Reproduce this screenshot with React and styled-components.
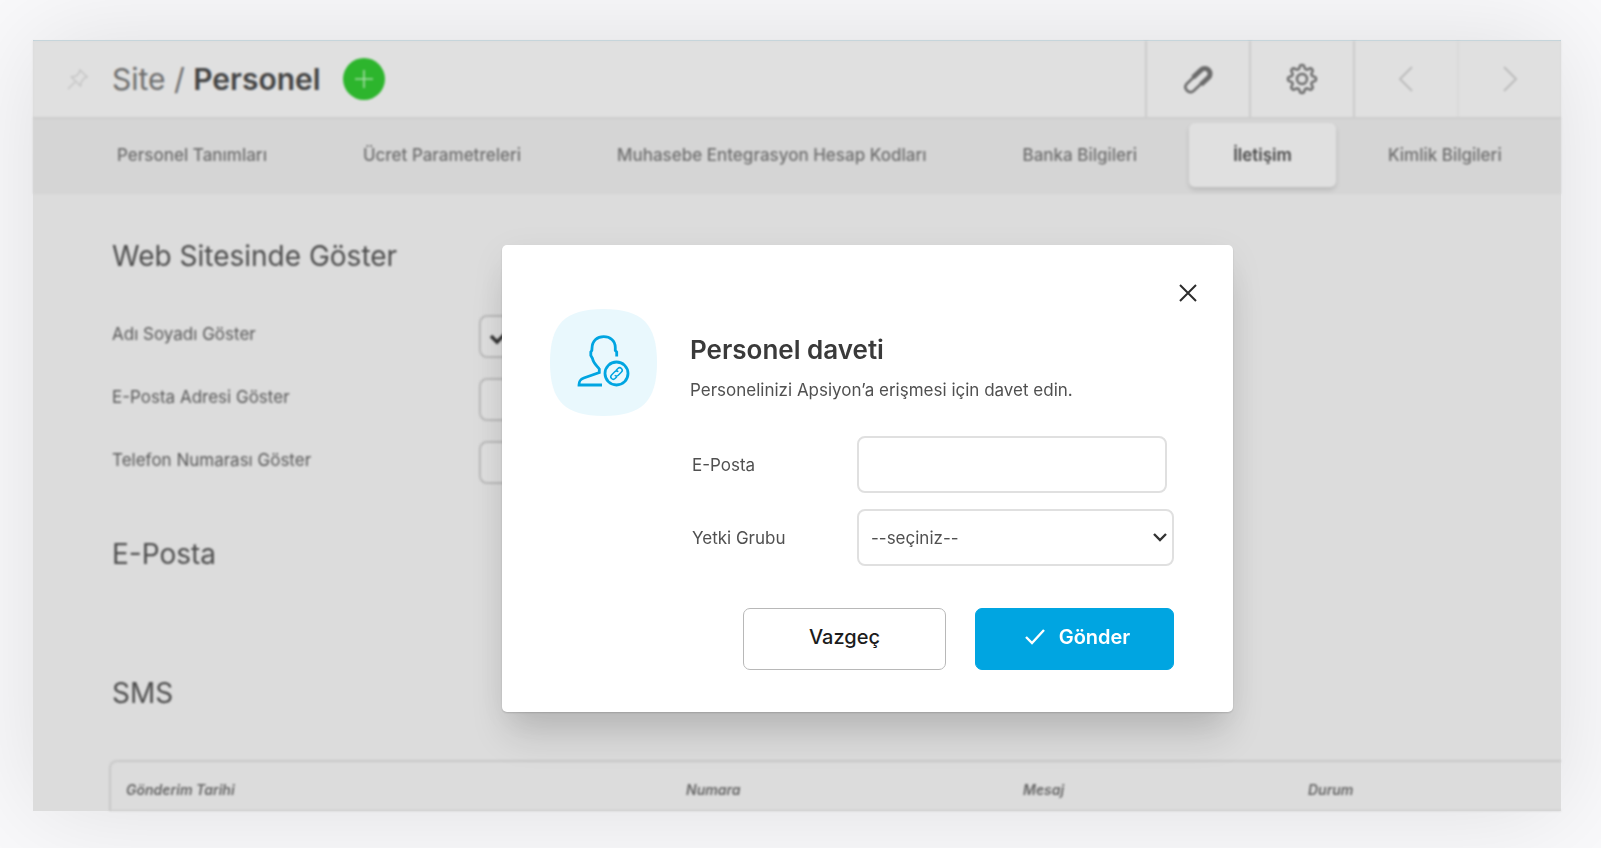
import styled, { createGlobalStyle } from 'styled-components';


const GlobalStyle = createGlobalStyle`
  * {
    box-sizing: border-box;
  }
  body {
    margin: 0;
    background: #f9f9fb;
    color: #3c3c3c;
    font-family: Inter, 'Liberation Sans', sans-serif;
    font-size: 17px;
  }
  button, input, select {
    font-family: inherit;
  }
`;

const Page = styled.div`
  min-height: 100vh;
  padding: 40px 40px 38px 33px;
  overflow: hidden;
`;

const Panel = styled.div`
  position: relative;
  border-top: 1px solid #b9d0d9;
  background: #dcdcdc;
  box-shadow: 0 0 100px rgba(0, 0, 0, 0.11);
`;

const Backdrop = styled.div`
  overflow: hidden;
  filter: blur(1px);
`;

const Header = styled.header`
  display: flex;
  align-items: stretch;
  height: 78px;
  background: #e0e0e0;
  border-bottom: 2px solid #cdcdcd;
`;

const HeaderTitle = styled.div`
  display: flex;
  flex: 1;
  align-items: center;
  padding-left: 34px;
  .pin {
    margin-right: 24px;
    color: #c6c6c6;
  }
`;

const Crumb = styled.h1`
  margin: 0 22px 0 0;
  color: #6c6c6c;
  font-size: 30px;
  font-weight: 400;
  line-height: 36px;
  strong {
    color: #444444;
    font-weight: 600;
  }
`;

const AddButton = styled.button`
  display: flex;
  align-items: center;
  justify-content: center;
  width: 42px;
  height: 42px;
  padding: 0;
  border: 0;
  border-radius: 50%;
  background: #2db52d;
  color: #a3dda3;
`;

const ToolButton = styled.button`
  display: flex;
  align-items: center;
  justify-content: center;
  width: 104px;
  padding: 0;
  border: 0;
  border-left: 2px solid ${props => props.$faint ? '#dadada' : '#cbcbcb'};
  background: transparent;
  color: ${props => props.$muted ? '#bdbdbd' : '#6a6a6a'};
`;

const Tabs = styled.nav`
  display: flex;
  gap: 8px;
  height: 75px;
  padding: 4px 0 7px 40px;
  background: #d5d5d5;
`;

const Tab = styled.a`
  display: flex;
  align-items: center;
  height: 64px;
  padding: 0 44px;
  border-radius: 6px;
  background: ${props => props.$active ? '#e0e0e0' : 'transparent'};
  box-shadow: ${props => props.$active ? '0 3px 5px rgba(0, 0, 0, 0.13)' : 'none'};
  color: ${props => props.$active ? '#484848' : '#6e6e6e'};
  font-size: 17px;
  font-weight: ${props => props.$active ? 600 : 500};
  text-decoration: none;
  white-space: nowrap;
`;

const Content = styled.main`
  padding: 44px 0 0 76px;
`;

const SectionTitle = styled.h2`
  margin: 0;
  padding-left: 3px;
  color: #4c4c4c;
  font-size: 28px;
  font-weight: 400;
  line-height: 36px;
`;

const Options = styled.div`
  display: grid;
  gap: 20px;
  margin: 41px 0 52px;
  padding-left: 3px;
`;

const Option = styled.label`
  display: grid;
  grid-template-columns: 367px 43px;
  height: 43px;
  color: #585858;
  font-size: 17px;
  line-height: 38px;
`;

const Checkbox = styled.input`
  width: 43px;
  height: 43px;
  margin: 0;
  appearance: none;
  border: 2px solid #bababa;
  border-radius: 8px;
  background: #dfdfdf;
  &:checked {
    background: #dfdfdf url("data:image/svg+xml,%3Csvg xmlns='http://www.w3.org/2000/svg' viewBox='0 0 20 20'%3E%3Cpath d='M2 7l6 6L18 3' fill='none' stroke='%23333' stroke-width='3.5'/%3E%3C/svg%3E") 8px 12px / 20px no-repeat;
  }
`;

const SmsTitle = styled(SectionTitle)`
  margin-top: 103px;
`;

const MessageTable = styled.table`
  width: 100%;
  margin-top: 49px;
  border: 2px solid #c9c9c9;
  border-right: 0;
  border-bottom-width: 1px;
  border-radius: 8px 0 0 0;
  border-spacing: 0;
  table-layout: fixed;
  th {
    height: 48px;
    padding: 6px 0 0 15px;
    color: #656565;
    font-size: 14px;
    font-style: italic;
    font-weight: 600;
    text-align: left;
  }
`;

const Overlay = styled.div`
  position: absolute;
  inset: 0;
  display: flex;
  align-items: flex-start;
  justify-content: center;
  padding: 204px 0 0 141px;
`;

const Dialog = styled.section`
  display: flex;
  flex-direction: column;
  width: 731px;
  padding: 34px 30px 42px 48px;
  border-radius: 5px;
  background: #ffffff;
  box-shadow: 0 1px 2px rgba(0, 0, 0, 0.16), 0 28px 36px -6px rgba(0, 0, 0, 0.14), 0 8px 36px rgba(0, 0, 0, 0.06);
`;

const CloseButton = styled.button`
  display: flex;
  align-items: center;
  justify-content: center;
  align-self: flex-end;
  width: 30px;
  height: 28px;
  padding: 0;
  border: 0;
  background: transparent;
  color: #2c2c2c;
`;

const DialogBody = styled.div`
  display: flex;
  gap: 33px;
  padding-right: 29px;
`;

const IconTile = styled.svg`
  flex: none;
  width: 107px;
  height: 107px;
  margin-top: 2px;
`;

const Form = styled.form`
  flex: 1;
  padding-top: 26px;
`;

const DialogTitle = styled.h2`
  margin: 0;
  color: #3a3a3a;
  font-size: 26px;
  font-weight: 600;
  line-height: 34px;
`;

const Lead = styled.p`
  margin: 11px 0 34px;
  color: #505050;
  font-size: 17px;
  line-height: 24px;
`;

const Field = styled.div`
  display: grid;
  grid-template-columns: 165px 1fr;
  align-items: center;
  margin-bottom: 16px;
  padding-left: 2px;
  label {
    color: #505050;
    font-size: 17px;
  }
`;

const TextInput = styled.input`
  width: calc(100% - 7px);
  height: 57px;
  padding: 0 12px;
  border: 2px solid #e0e0e0;
  border-radius: 8px;
  font-size: 17px;
  outline: 0;
`;

const SelectInput = styled.select`
  width: 100%;
  height: 57px;
  padding: 0 12px;
  appearance: none;
  border: 2px solid #e0e0e0;
  border-radius: 8px;
  background: #ffffff url("data:image/svg+xml,%3Csvg xmlns='http://www.w3.org/2000/svg' viewBox='0 0 14 9'%3E%3Cpath d='M1 1l6 6 6-6' fill='none' stroke='%23333' stroke-width='2.4'/%3E%3C/svg%3E") right 5px center / 14px 9px no-repeat;
  color: #505050;
  font-size: 17px;
`;

const Actions = styled.div`
  display: flex;
  justify-content: flex-end;
  gap: 29px;
  margin-top: 42px;
`;

const Button = styled.button`
  display: flex;
  align-items: center;
  justify-content: center;
  gap: 14px;
  width: ${props => props.$primary ? 199 : 203}px;
  height: 62px;
  padding: ${props => props.$primary ? '0 0 4px 6px' : '0 0 4px'};
  border: 1px solid ${props => props.$primary ? '#00a5e1' : '#b8b8b8'};
  border-radius: 7px;
  background: ${props => props.$primary ? '#00a5e1' : '#ffffff'};
  color: ${props => props.$primary ? '#ffffff' : '#1c1c1c'};
  font-size: 20px;
  font-weight: ${props => props.$primary ? 600 : 500};
`;

const tabs = [
  'Personel Tanımları',
  'Ücret Parametreleri',
  'Muhasebe Entegrasyon Hesap Kodları',
  'Banka Bilgileri',
  'İletişim',
  'Kimlik Bilgileri',
];

const options = [
  { label: 'Adı Soyadı Göster', checked: true },
  { label: 'E-Posta Adresi Göster', checked: false },
  { label: 'Telefon Numarası Göster', checked: false },
];

const PinIcon = () => (
  <svg className="pin" width="21" height="21" viewBox="0 0 21 21" fill="none" stroke="currentColor" strokeWidth="1.6">
    <path d="M13 1l7 7-2.5 1-3 3.5-1 4.5-9-9 4.500-1 3-3zM8 13l-7 7" />
  </svg>
);

const PlusIcon = () => (
  <svg width="18" height="18" viewBox="0 0 18 18" stroke="currentColor" strokeWidth="1.6">
    <path d="M9 0v18M0 9h18" />
  </svg>
);

const ClipIcon = () => (
  <svg width="32" height="30" viewBox="0 0 32 30" fill="none" stroke="currentColor">
    <path d="M14 11l-9.500 9a5 5 0 0 0 7 7L21 18" strokeWidth="2.6" />
    <path d="M11 13.500L19 6a5.300 5.300 0 0 1 7.500 7.500L19 20.500" strokeWidth="5" />
  </svg>
);

// eight rounded teeth around the hub
const gearPath = Array.from({ length: 96 }, (_, i) => {
  const angle = (i / 96) * Math.PI * 2;
  const wave = Math.cos(8 * angle);
  const r = 12.2 + 2 * Math.tanh(1.6 * wave);
  return `${(16 + r * Math.cos(angle)).toFixed(2)} ${(16 + r * Math.sin(angle)).toFixed(2)}`;
}).join('L');

const GearIcon = () => (
  <svg width="32" height="32" viewBox="0 0 32 32" fill="none" stroke="currentColor" strokeWidth="2.4" strokeLinejoin="round">
    <path d={`M${gearPath}Z`} />
    <circle cx="16" cy="16" r="5" />
  </svg>
);

const ArrowIcon = ({ path }) => (
  <svg width="14" height="26" viewBox="0 0 14 26" fill="none" stroke="currentColor" strokeWidth="2">
    <path d={path} />
  </svg>
);

const InviteIcon = () => (
  <IconTile viewBox="0 0 107 107" fill="none" stroke="#00a5e1" strokeWidth="2.8">
    <path d="M53.5 0C92 0 107 15 107 53.5S92 107 53.5 107 0 92 0 53.5 15 0 53.5 0z" fill="#e9f8fd" stroke="none" />
    <path d="M66.7 47.500v-4.500l-1.400-1.500v-3C65.300 31.500 60 27.700 53.700 27.700S42.200 31.500 42 39.300l-.2 2.200-1 1.500v3.500l1.700 3c.8 4.500 4 7 6.800 10.500v3.500l-15.500 5.500c-3.800 1.500-4.800 3-4.800 7H52" />
    <circle cx="66.500" cy="64.500" r="11.500" />
    <g transform="rotate(-45 66.500 64.500)" strokeWidth="1.5">
      <path d="M64.500 67h-2.500a2.500 2.500 0 0 1 0-5h4.500a2.500 2.500 0 0 1 2.500 2.500" />
      <path d="M68.500 62h2.500a2.500 2.500 0 0 1 0 5h-4.500a2.500 2.500 0 0 1-2.500-2.500" />
    </g>
  </IconTile>
);

const App = () => (
  <Page>
    <GlobalStyle />
    <Panel>
      <Backdrop>
        <Header>
          <HeaderTitle>
            <PinIcon />
            <Crumb>Site / <strong>Personel</strong></Crumb>
            <AddButton type="button" aria-label="Ekle"><PlusIcon /></AddButton>
          </HeaderTitle>
          <ToolButton type="button" aria-label="Dosyalar"><ClipIcon /></ToolButton>
          <ToolButton type="button" aria-label="Ayarlar"><GearIcon /></ToolButton>
          <ToolButton type="button" aria-label="Önceki" $muted><ArrowIcon path="M13 1L1 13l12 12" /></ToolButton>
          <ToolButton type="button" aria-label="Sonraki" $muted $faint><ArrowIcon path="M1 1l12 12L1 25" /></ToolButton>
        </Header>

        <Tabs>
          {tabs.map(tab => (
            <Tab key={tab} href="#" $active={tab === 'İletişim'}>{tab}</Tab>
          ))}
        </Tabs>

        <Content>
          <SectionTitle>Web Sitesinde Göster</SectionTitle>
          <Options>
            {options.map(option => (
              <Option key={option.label}>
                {option.label}
                <Checkbox type="checkbox" defaultChecked={option.checked} />
              </Option>
            ))}
          </Options>

          <SectionTitle>E-Posta</SectionTitle>
          <SmsTitle>SMS</SmsTitle>
          <MessageTable>
            <colgroup>
              <col width="560" />
              <col width="337" />
              <col width="285" />
              <col />
            </colgroup>
            <thead>
              <tr>
                <th>Gönderim Tarihi</th>
                <th>Numara</th>
                <th>Mesaj</th>
                <th>Durum</th>
              </tr>
            </thead>
          </MessageTable>
        </Content>
      </Backdrop>

      <Overlay>
        <Dialog role="dialog" aria-labelledby="invite-title">
          <CloseButton type="button" aria-label="Kapat">
            <svg width="18" height="18" viewBox="0 0 18 18" stroke="currentColor" strokeWidth="2">
              <path d="M1 1l16 16M17 1L1 17" />
            </svg>
          </CloseButton>
          <DialogBody>
            <InviteIcon />
            <Form>
              <DialogTitle id="invite-title">Personel daveti</DialogTitle>
              <Lead>Personelinizi Apsiyon’a erişmesi için davet edin.</Lead>
              <Field>
                <label htmlFor="email">E-Posta</label>
                <TextInput id="email" type="email" />
              </Field>
              <Field>
                <label htmlFor="role">Yetki Grubu</label>
                <SelectInput id="role">
                  <option>--seçiniz--</option>
                </SelectInput>
              </Field>
              <Actions>
                <Button type="button">Vazgeç</Button>
                <Button type="button" $primary>
                  <svg width="20" height="16" viewBox="0 0 20 16" fill="none" stroke="currentColor" strokeWidth="2.4">
                    <path d="M1 8l6 6L19 1" />
                  </svg>
                  Gönder
                </Button>
              </Actions>
            </Form>
          </DialogBody>
        </Dialog>
      </Overlay>
    </Panel>
  </Page>
)

export default App;
